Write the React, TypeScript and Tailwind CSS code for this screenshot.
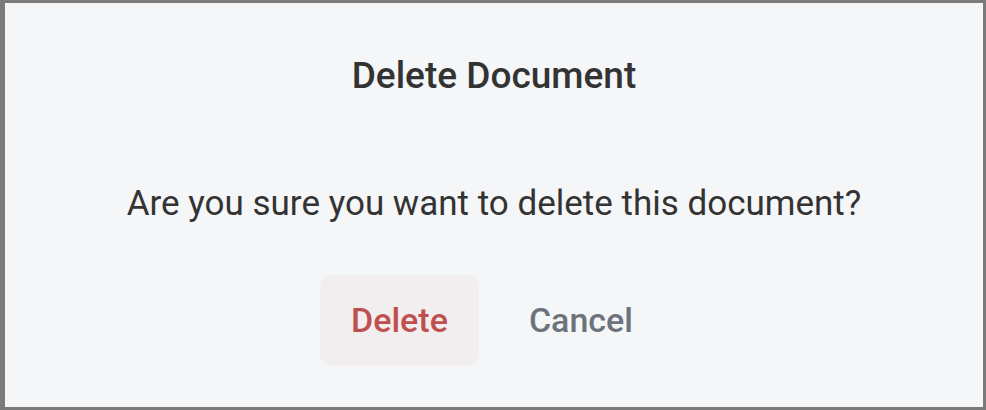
export default function App() {
  return (
    <div className="h-[410px] w-[986px] border-[#7b7b7b] border-t-[3px] border-r-[3px] border-b-[3px] border-l-[5px] bg-[#f5f6f8] font-['Roboto',sans-serif]">
      <div className="flex h-full flex-col items-center">
        <h2 className="mt-[51px] text-[37px] font-medium leading-[43px] text-[#333333]">Delete Document</h2>
        <p className="mt-[86px] text-[35px] leading-[41px] text-[#333333]">Are you sure you want to delete this document?</p>
        <div className="mt-[51px] mr-[5px] flex gap-[20px]">
          <button className="h-[91px] rounded-[12px] bg-[#f2eeef] px-[31px] text-[34px] font-medium text-[#c0504f]">Delete</button>
          <button className="h-[91px] rounded-[12px] px-[30px] text-[34px] font-medium text-[#6c737b]">Cancel</button>
        </div>
      </div>
    </div>
  );
}
